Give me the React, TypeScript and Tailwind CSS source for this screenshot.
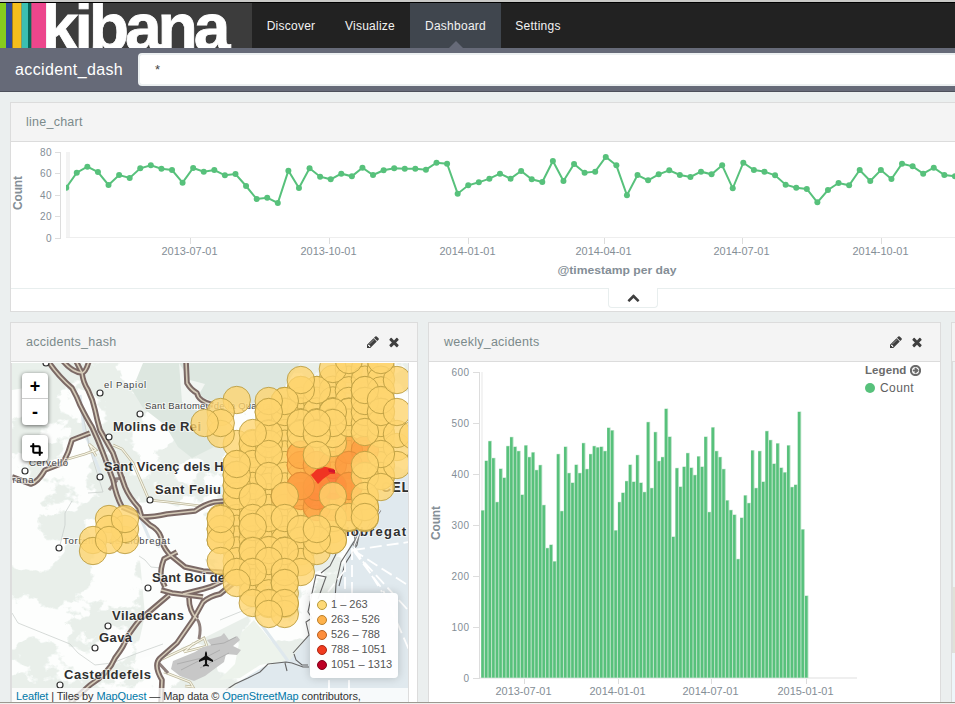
import React from "react";
import { Crop, CircleArrowRight } from "lucide-react";

// Tops of weekly points, thirds of a pixel below the chart's top edge
const linePoints = [
  143, 98, 80, 96, 135, 105, 114, 85, 76, 86, 90, 128, 84, 95, 90, 106, 102, 138, 177, 173, 189, 92, 144,
  85, 110, 118, 101, 109, 83, 105, 91, 85, 86, 86, 89, 68, 71, 161, 136, 127, 116, 101, 116, 93, 118, 126, 63, 123, 72, 98, 95, 51, 76,
  166, 105, 121, 103, 91, 105, 111, 95, 103, 76, 145, 68, 90, 95, 106, 134, 143, 147, 187, 150, 129, 136, 90, 123, 90, 117, 71, 79, 101, 83, 105, 109,
];
const barTops = [
  572, 423, 364, 415, 547, 447, 474, 379, 352, 381, 394, 525, 377, 412, 398, 451, 436, 556, 685, 675, 725, 403, 574, 381, 460, 489, 435, 460, 370, 448,
  403, 379, 383, 381, 394, 324, 332, 632, 547, 519, 484, 435, 486, 406, 489, 517, 307, 505, 337, 424, 412, 267, 351, 651, 445, 501, 441, 400,
  444, 466, 410, 441, 351, 577, 323, 394, 412, 448, 542, 571, 585, 718, 594, 527, 550, 392, 505, 394, 486, 334, 361, 432, 371, 444, 458, 377, 502, 495,
  276, 629, 828,
];

const PENCIL =
  "M491 1536l91-91-235-235-91 91v107h128v128h107zm523-928q0-22-22-22-10 0-17 7l-542 542q-7 7-7 17 0 22 22 22 10 0 17-7l542-542q7-7 7-17zm-54-192l416 416-832 832h-416v-416zm683 96q0 53-37 90l-166 166-416-416 166-165q36-38 90-38 53 0 91 38l235 234q37 39 37 91z";
const TIMES =
  "M1490 1322q0 40-28 68l-136 136q-28 28-68 28t-68-28l-294-294-294 294q-28 28-68 28t-68-28l-136-136q-28-28-28-68t28-68l294-294-294-294q-28-28-28-68t28-68l136-136q28-28 68-28t68 28l294 294 294-294q28-28 68-28t68 28l136 136q28 28 28 68t-28 68l-294 294 294 294q28 28 28 68z";
const CHEVRON =
  "M1683 1331l-166 165q-19 19-45 19t-45-19l-531-531-531 531q-19 19-45 19t-45-19l-166-165q-19-19-19-45.5t19-45.5l742-741q19-19 45-19t45 19l742 741q19 19 19 45.5t-19 45.5z";

function Glyph({ d, size }: { d: string; size: number }) {
  return (
    <svg viewBox="0 0 1792 1792" width={size} height={size} fill="#3f3f3f">
      <path d={d} />
    </svg>
  );
}

function Nav() {
  return (
    <nav className="flex h-[45px] shrink-0 bg-[#222222] text-[12px] tracking-[0.25px] text-[#f2f2f2]">
      <div className="flex h-[45px] w-[252px] overflow-hidden bg-[#3c3c3c]">
        <div className="w-[6px] shrink-0 bg-[#86cb1e]" />
        <div className="w-[6px] shrink-0 bg-[#2f4a99]" />
        <div className="w-[9px] shrink-0 border-l border-[#a5801c] bg-[#f5be1d]" />
        <div className="w-[7px] shrink-0 border-l border-[#829d63] bg-[#3bbfb2]" />
        <div className="w-[3px] shrink-0 bg-[#07665a]" />
        <div className="w-[15px] shrink-0 border-l border-[#9b586f] bg-[#ec468c]" />
        <svg width="206" height="45" viewBox="46 3 206 45" className="shrink-0">
          <text x="41.800" y="49.500" fontSize="66" fontWeight="bold" fill="#fff" stroke="#fff" strokeWidth="0.800" textLength="189" lengthAdjust="spacing">kibana</text>
        </svg>
      </div>
      <div className="flex w-[78px] items-center justify-center">Discover</div>
      <div className="flex w-[80px] items-center justify-center">Visualize</div>
      <div className="relative flex w-[91px] items-center justify-center bg-[#40464e]">
        Dashboard
        <div className="absolute bottom-0 left-[39px] h-0 w-0 border-x-[7px] border-b-[7px] border-x-transparent border-b-[#666a78]" />
      </div>
      <div className="flex w-[74px] items-center justify-center">Settings</div>
    </nav>
  );
}

function PanelTitle({ title, icons }: { title: string; icons?: boolean }) {
  return (
    <div className="flex h-[39px] shrink-0 items-center border-b border-[#dcdcdc] bg-[#f4f4f4] pr-[16px] pl-[15px] text-[12.5px] tracking-[0.25px] text-[#7b8a8b]">
      <span className="grow">{title}</span>
      {icons && (
        <span className="flex items-center gap-[7px]">
          <Glyph d={PENCIL} size={14} />
          <Glyph d={TIMES} size={14} />
        </span>
      )}
    </div>
  );
}

function LineChart() {
  const pts = linePoints.map((y, i) => [66.2 + i * 10.58, y / 3 - 2]);
  const ticks: [number, string][] = [
    [190.5, "2013-07-01"], [329.5, "2013-10-01"], [468.5, "2014-01-01"], [604.5, "2014-04-01"], [742.5, "2014-07-01"], [881.5, "2014-10-01"],
  ];
  return (
    <svg width="944" height="146" viewBox="11 0 944 146" className="block" fill="#848e96">
      <clipPath id="plot"><rect x="66" y="0" width="900" height="100" /></clipPath>
      <text transform="translate(22 68) rotate(-90)" fontSize="12" fontWeight="bold" textLength="34">Count</text>
      {["80", "60", "40", "20", "0"].map((t, i) => (
        <g key={t}>
          <text x="52" y={14 + i * 21.4} fontSize="10" textAnchor="end" letterSpacing="0.400">{t}</text>
          <path d={`M55 ${Math.round(10 + i * 21.45) + 0.5}h6`} stroke="#ddd" />
        </g>
      ))}
      <path d="M60.500 10v87" stroke="#ddd" />
      <rect x="66" y="10" width="4" height="86" fill="#f3f3f3" />
      <path d="M66 95.500h890" stroke="#eee" />
      {ticks.map(([x, t]) => (
        <g key={t}>
          <path d={`M${x} 96v6`} stroke="#ddd" />
          <text x={x - 29} y="113" fontSize="10" textLength="56" lengthAdjust="spacingAndGlyphs">{t}</text>
        </g>
      ))}
      <text x="557.500" y="132" fontSize="11" fontWeight="bold" textLength="119" lengthAdjust="spacingAndGlyphs">@timestamp per day</text>
      <g clipPath="url(#plot)" fill="#57c17b">
        <polyline points={pts.map((p) => p.join(",")).join(" ")} fill="none" stroke="#57c17b" strokeWidth="2" />
        {pts.map(([x, y], i) => <circle key={i} cx={x} cy={y} r="3" />)}
      </g>
    </svg>
  );
}

const X = (c: number) => 204.700 + c * 16.020;
// column number, first row y, last row y
const columns: [number, number, number][] = [
  [1, 518, 540], [2, 464, 572], [3, 443, 593], [4, 412, 604], [5, 401, 604],
  [6, 390, 562], [7, 390, 551], [8, 379, 540], [9, 369, 518], [10, 369, 518], [11, 369, 476],
];
const hot: [number, number, string][] = [
  [6, 465, "#feb24c"], [6, 496, "#fd9f42"], [6, 455, "#feab49"], [7, 465, "#fda747"], [8, 465, "#feab49"], [9, 450, "#fda747"], [10, 450, "#fd9f42"], [9, 507, "#fdac4a"],
  [8, 507, "#fdac4a"], [7, 507, "#fd9f42"], [9, 465, "#fd9a40"], [9, 486, "#fd9a40"], [6, 486, "#fd9a40"], [5, 496, "#feb24c"], [7, 496, "#fd8d3c"],
  [8, 486, "#fc6a33"], [7, 487, "#fd8d3c"], [6, 486, "#fda044"], [9, 486, "#fd9a40"],
];
// grid cells painted last, bottom to top: column, y
const topCircles: [number, number][] = [
  [2, 444], [3, 454], [3, 444], [3, 464], [4, 444], [4, 434], [4, 454], [6, 434], [8, 443], [8, 434], [7, 434], [9, 423], [9, 412], [10, 423], [10, 412], [11, 434], [11, 423], [10, 432],
  [8, 412], [7, 390], [10, 401], [10, 390], [11, 412], [11, 400], [12, 380], [8, 369], [9, 360], [11, 360], [6, 390], [6, 380], [5, 412], [5, 401], [4, 401], [4, 412],
  [2, 400], [1, 412], [1, 434], [1, 423], [0, 423], [3, 433], [6, 423], [8, 423], [7, 434], [7, 423], [12, 447], [12, 434], [12, 412], [13, 435], [11, 476], [10, 476], [10, 496],
  [12, 465], [11, 454], [10, 465], [7, 455], [3, 486], [4, 476], [2, 496], [2, 485], [2, 475], [2, 464], [3, 497], [5, 496], [8, 496], [11, 487],
  [3, 518], [4, 518], [5, 518], [8, 518], [9, 517], [10, 507], [10, 517], [8, 540], [7, 540], [6, 529], [7, 529], [3, 527], [1, 529], [1, 540], [1, 519],
  [4, 550], [3, 551], [5, 551], [4, 561], [1, 561], [2, 572], [3, 572], [2, 583], [6, 572], [5, 572], [5, 583], [3, 603], [4, 603], [5, 614], [5, 603], [4, 614],
];
const westCluster = [[125, 540], [109, 519], [125, 529], [109, 529], [93, 540], [93, 551], [125, 519], [109, 540]];

function Dot({ x, y, fill = "#fed56f", stroke = "#b79a3e" }: { x: number; y: number; fill?: string; stroke?: string }) {
  return <circle cx={x} cy={y} r="13.700" fill={fill} fillOpacity="0.800" stroke={stroke} strokeOpacity="0.850" strokeWidth="1" />;
}

const roads = [
  "M48 361Q58 376 72 388Q77 397 80 405Q87 419 92 427Q98 440 103 453L113 480Q116 496 122 507",
  "M63 361Q72 372 82 373Q86 372 89 361M76 361L82 373Q83 382 88 390Q93 400 95 410Q97 420 100 430L113 453L125 487Q129 497 139 508L142 518",
  "M90 433L72 440Q69 452 63 463L45 470Q38 482 31 484L12 477",
  "M186 361L187 383Q191 390 197 393Q198 401 213 405",
  "M141 517Q155 517 167 514L195 511Q205 504 214 502L235 500",
  "M122 507L138 514L150 525Q158 529 161 537Q162 546 169 554L185 567L203 571L235 573",
  "M177 552L164 559Q160 569 161 578L165 587",
  "M161 590L172 593L203 597M183 594L203 589Q220 585 232 573",
  "M70 703L90 685Q109 673 115 658Q125 645 127 637Q140 618 143 617L169 595",
  "M161 703L162 680Q153 665 160 658L177 643L193 620L203 602Q210 596 220 594L237 580",
  "M189 598Q189 611 197 619",
];
const minorRoads = "M68 459L85 454L96 450L89 444L96 456M113 445L122 449L133 463L149 500L168 502L201 506L210 503M160 660L190 646L204 638L207 646L184 652L194 643M164 672L190 682L193 687L185 686";
const places: [number, number, number, string, number, boolean][] = [
  [104, 388, 42, "el Papiol", 9.5, false], [145, 409, 126, "Sant Bartomeu de la Quadra", 9.5, false], [29, 466, 39, "Cervelló", 9.5, false], [12.5, 483, 21, "rana", 9.5, false],
  [63, 544, 107, "Torrelles de Llobregat", 9.5, false],
  [113, 431, 88, "Molins de Rei", 13, true], [104, 471, 133, "Sant Vicenç dels Hor", 13, true], [155, 494, 66, "Sant Feliu", 13, true], [381, 492, 29, "CEL", 14, true],
  [346, 536, 60, "lobregat", 13, true], [152, 582, 73, "Sant Boi de", 13, true], [112, 620, 72, "Viladecans", 13, true], [99, 642, 33, "Gavà", 13, true], [64, 679, 87, "Castelldefels", 13, true],
];
const towns = [[46, 363], [100, 393], [140, 414], [109, 437], [100, 477], [25, 471], [150, 500], [59, 548], [148, 588], [108, 626], [95, 648], [60, 685]];

function MapDrawing() {
  return (
    <svg width="397" height="339" viewBox="12 363 397 339" className="block bg-[#fdfefd]">
      <defs>
        <filter id="terrain" x="0" y="0" width="1" height="1" colorInterpolationFilters="sRGB">
          <feTurbulence type="fractalNoise" baseFrequency="0.022 0.028" numOctaves="5" seed="12" />
          <feColorMatrix values="0 0 0 0 0.905  0 0 0 0 0.935  0 0 0 0 0.915  24 0 0 0 -11.300" />
        </filter>
      </defs>
      <rect x="12" y="363" width="397" height="339" filter="url(#terrain)" opacity="0.900" />
      <path d="M143 363H300L270 410L225 405L218 445L192 458L178 447L165 425L143 408L132 390Z" fill="#dde7e0" />
      <path d="M179 363L190 380L205 384L198 396L215 402L200 412L182 402Z" fill="#f3f6f3" />
      <path d="M12 363H45L38 386L12 390Z" fill="#e9f0eb" />
      <path d="M116 507L160 500L210 520L205 560L240 590L250 615L190 645L135 660L145 615L140 560Z" fill="#fcfdfc" />
      <path d="M409 466L388 490L372 518L350 545L338 580L325 615L290 660L263 667L240 681L220 703H409Z" fill="#e0e9ee" />
      <path d="M254 620L287 660L260 665L240 678L219 680L235 664L241 633Z" fill="#edf3ec" />
      <path d="M253 613L288 661M80 395L84 430L101 475M135 505L150 540L160 547" stroke="#dfe8ed" strokeWidth="3" fill="none" />
      <path d="M12 613L18 623L70 644L78 653L95 665L112 663L138 653L163 644M220 620L252 607M80 400L90 450L103 492L88 493M72 501L65 513V525L60 545M139 556L145 560L151 567L161 568" fill="none" stroke="#c6ccc8" strokeWidth="0.700" />
      <path d={minorRoads} fill="none" stroke="#bdb79c" strokeWidth="2.600" />
      <path d={minorRoads} fill="none" stroke="#f8f6e7" strokeWidth="1.200" />
      <path d="M173 661L195 652L203 647L211 645L207 640L221 636L224 633L229 640L237 636L240 640L233 646L241 650L237 655L226 654L224 662L213 670L205 676L194 681L180 676L171 669Z" fill="#c7c7c7" />
      <path d="M177 664L202 658M181 670L220 650M200 668L229 653M211 645L224 643L236 637" stroke="#aaa" strokeWidth="0.900" fill="none" />
      <path d="M197 619Q202 626 199 639M115 479L125 478M109 490L117 480M156 660L168 673" fill="none" stroke="#8f807c" strokeWidth="3" />
      <g fill="none" stroke="#7b6965" strokeWidth="5.600" strokeLinejoin="round">{roads.map((d, i) => <path key={i} d={d} />)}</g>
      <g fill="none" stroke="#d5cbb8" strokeWidth="1.600" strokeLinejoin="round">{roads.map((d, i) => <path key={i} d={d} />)}</g>
      <g fill="none" stroke="#666" strokeWidth="1.100">
        <path d="M226 690L235 684L248 678L260 672L268 664L286 662L292 663L303 667H309M285 663L287 671M293 653L309 635L306 622L312 618L308 612L316 575L326 577L318 599M294 654L296 660L302 665H308M354 525L355 540L341 562L336 584L335 600M359 535L357 545L345 564L339 586M336 554L330 566L321 573" />
        <path d="M354 546L360 531M380 510L366 532" strokeWidth="3" stroke="#888" />
        <path d="M354 546L360 531M380 510L366 532" stroke="#fff" />
      </g>
      <path d="M353 550L409 542M353 550L409 586M353 550L407 609M353 550L383 590L409 650M352 548L352 600M345 560V600M345 570L328 592M349 680V701M329 680V701M354 547L382 592" fill="none" stroke="#fff" strokeWidth="1.800" strokeDasharray="12 5" />
      {towns.map(([x, y], i) => <circle key={i} cx={x} cy={y} r="3" fill="#fff" stroke="#333" strokeWidth="1.200" />)}
      {places.map(([x, y, w, t, s, b]) => (
        <text key={t} x={x} y={y} fontSize={s} fontWeight={b ? 700 : 400} fill={b ? "#303030" : "#454545"} textLength={w} stroke="#fff" strokeWidth="2" strokeOpacity="0.600" paintOrder="stroke">{t}</text>
      ))}
      <path transform="translate(198 651)" d="M8 0q1.200 1 1.200 5L15 9v2L9.200 8.700 9 13l2 1.500v1L8 15l-3 .5v-1L7 13 6.800 8.700 1 11V9l5.800-4Q6.800 1 8 0z" fill="#111" />
      {westCluster.map(([x, y], i) => <Dot key={i} x={x} y={y} />)}
      {columns.flatMap(([c, a, b]) => {
        const n = Math.round((b - a) / 10.600);
        return Array.from({ length: n + 1 }, (_, i) => <Dot key={`${c}-${a}-${i}`} x={X(c)} y={a + (i * (b - a)) / n} />);
      })}
      {hot.map(([c, y, f], i) => <Dot key={i} x={X(c)} y={y} fill={f} stroke="#dc8b35" />)}
      <path d="M311 475L316 470L322 466L334 469L335 474L330 474L323 479L318 484Z" fill="#f03422" />
      <path d="M328 469L335 470L335 473L329 472Z" fill="#d3142d" />
      {topCircles.map(([c, y], i) => <Dot key={i} x={X(c)} y={y} />)}
    </svg>
  );
}

const bands: [string, string, string][] = [
  ["1 – 263", "#fed976", "#b79a3e"], ["263 – 526", "#feb24c", "#ba7f2c"], ["526 – 788", "#fd8d3c", "#b65f20"], ["788 – 1051", "#f03b20", "#aa2613"], ["1051 – 1313", "#bd0026", "#7e001a"],
];

function MapPanel() {
  return (
    <section className="flex h-[420px] w-[408px] shrink-0 flex-col border border-[#dcdcdc] bg-white">
      <PanelTitle title="accidents_hash" icons />
      <div className="relative mt-px h-[340px] w-[398px] overflow-hidden border-r border-l border-[#ddd]">
        <MapDrawing />
        <div className="absolute top-[10px] left-[10px] w-[26px] overflow-hidden rounded-[4px] bg-white text-center text-[18px] leading-[26px] font-bold text-black shadow-[0_1px_4px_rgba(0,0,0,0.6)]">
          <div className="h-[26px] border-b border-[#ccc]">+</div>
          <div className="flex h-[26px] items-center justify-center leading-[26px]">-</div>
        </div>
        <div className="absolute top-[72px] left-[10px] flex h-[26px] w-[26px] items-center justify-center rounded-[4px] bg-white pt-[3px] pl-[2px] text-black shadow-[0_1px_4px_rgba(0,0,0,0.6)]">
          <Crop size={13} strokeWidth={3.800} />
        </div>
        <div className="absolute top-[230px] left-[298px] flex h-[85px] w-[88px] flex-col rounded-[4px] bg-white/95 pt-[4px] pl-[7px] text-[11px] leading-[15px] text-[#555] shadow-[0_0_10px_rgba(0,0,0,0.2)]">
          {bands.map(([t, f, s]) => (
            <div key={t} className="flex items-center gap-[4px] whitespace-nowrap">
              <svg width="10" height="10" viewBox="0 0 10 10"><circle cx="5" cy="5" r="4.500" fill={f} stroke={s} /></svg>
              <span>{t}</span>
            </div>
          ))}
        </div>
        <div className="absolute top-[325px] left-0 h-[15px] w-[397px] bg-white/75 pl-[4px] text-[11px] leading-[16px] tracking-[-0.1px] whitespace-nowrap text-[#333]">
          <span className="text-[#0078a8]">Leaflet</span> | Tiles by <span className="text-[#0078a8]">MapQuest</span> — Map data © <span className="text-[#0078a8]">OpenStreetMap</span> contributors,
        </div>
      </div>
    </section>
  );
}

function BarPanel() {
  const ticks: [number, string][] = [[524.5, "2013-07-01"], [618.5, "2014-01-01"], [711.5, "2014-07-01"], [806.5, "2015-01-01"]];
  return (
    <section className="flex h-[420px] w-[513px] shrink-0 flex-col border border-[#dcdcdc] bg-white">
      <PanelTitle title="weekly_acidents" icons />
      <div className="flex">
        <svg width="430" height="340" viewBox="429 362 430 340" className="block shrink-0" fill="#848e96">
          <text transform="translate(440 540) rotate(-90)" fontSize="12" fontWeight="bold" textLength="34">Count</text>
          {[600, 500, 400, 300, 200, 100, 0].map((v, i) => (
            <g key={v}>
              <text x="469.500" y={376 + i * 51} fontSize="10" textAnchor="end" letterSpacing="0.400">{v}</text>
              <path d={`M473 ${372.5 + i * 51}h7`} stroke="#ddd" />
            </g>
          ))}
          <path d="M479.500 372v307" stroke="#ddd" />
          <rect x="481" y="372" width="2" height="306" fill="#f3f3f3" />
          <path d="M480 678H857" stroke="#eaeaea" strokeWidth="1.500" />
          {barTops.map((t, i) => {
            const x = 481.100 + i * 3.597;
            const y = 320 + t / 3;
            return (
              <g key={i}>
                <rect x={x} y={y - 0.500} width="3.597" height={678.500 - y} fill="#b1dfc0" />
                <rect x={x + 0.200} y={y} width="2.500" height={677.500 - y} fill="#57c17b" />
              </g>
            );
          })}
          {ticks.map(([x, t]) => (
            <g key={t}>
              <path d={`M${x} 679v5`} stroke="#ddd" />
              <text x={x - 29} y="695" fontSize="10" textLength="56" lengthAdjust="spacingAndGlyphs">{t}</text>
            </g>
          ))}
        </svg>
        <div className="flex flex-col pt-[1px] pl-[6px] text-[12px] leading-[14px] tracking-[0.4px] text-[#5f5f5f]">
          <div className="flex items-center gap-[3px] text-[11.5px] font-bold tracking-[0.1px] text-[#6b6b6b]">
            Legend <CircleArrowRight size={11} strokeWidth={4.500} />
          </div>
          <div className="mt-[4px] flex items-center gap-[5px]">
            <span className="h-[10px] w-[10px] rounded-full bg-[#57c17b]" />
            Count
          </div>
        </div>
      </div>
    </section>
  );
}

export default function App() {
  return (
    <div className="flex h-[704px] w-[955px] flex-col overflow-hidden bg-[#ebefef] font-['Liberation_Sans',Arial,sans-serif]">
      <div className="h-[3px] shrink-0 border-b border-black bg-[#c9c9c7]" />
      <Nav />
      <header className="flex h-[44px] shrink-0 items-start border-b border-[#4d505b] bg-[#666a78]">
        <div className="w-[138px] pt-[10px] pl-[15px] text-[16px] leading-[24px] tracking-[0.38px] whitespace-nowrap text-white">accident_dash</div>
        <div className="mt-[5px] h-[33px] grow rounded-l-[4px] border-2 border-r-0 border-[#ecf0f1] bg-white pt-[6px] pl-[15px] text-[13px] leading-[18px] text-[#444]">*</div>
      </header>
      <main className="flex h-[610px] shrink-0 flex-col gap-[10px] overflow-hidden pt-[10px] pl-[10px]">
        <section className="flex h-[210px] shrink-0 flex-col border border-r-0 border-[#dcdcdc] bg-white">
          <PanelTitle title="line_chart" />
          <LineChart />
          <div className="flex h-[23px] shrink-0">
            <div className="h-px w-[597px] bg-[#e8eeee]" />
            <div className="flex h-[20px] w-[50px] items-center justify-center rounded-b-[4px] border border-t-0 border-[#e8eeee]">
              <Glyph d={CHEVRON} size={13} />
            </div>
            <div className="h-px grow bg-[#e8eeee]" />
          </div>
        </section>
        <div className="flex gap-[10px]">
          <MapPanel />
          <BarPanel />
          <section className="h-[420px] w-[20px] shrink-0 border border-[#dcdcdc] bg-[#eef6fa]">
            <div className="h-[39px] border-b border-[#ddd] bg-[#f4f4f4]" />
            <div className="h-[225px] border-l border-[#ddd] bg-[#edf4f4]" />
            <div className="h-[66px] border-l border-[#ddd] bg-[#e0e2d9]" />
          </section>
        </div>
      </main>
      <div className="h-px shrink-0 bg-[#9c9890]" />
      <div className="h-px shrink-0 bg-[#f0f0ee]" />
    </div>
  );
}
